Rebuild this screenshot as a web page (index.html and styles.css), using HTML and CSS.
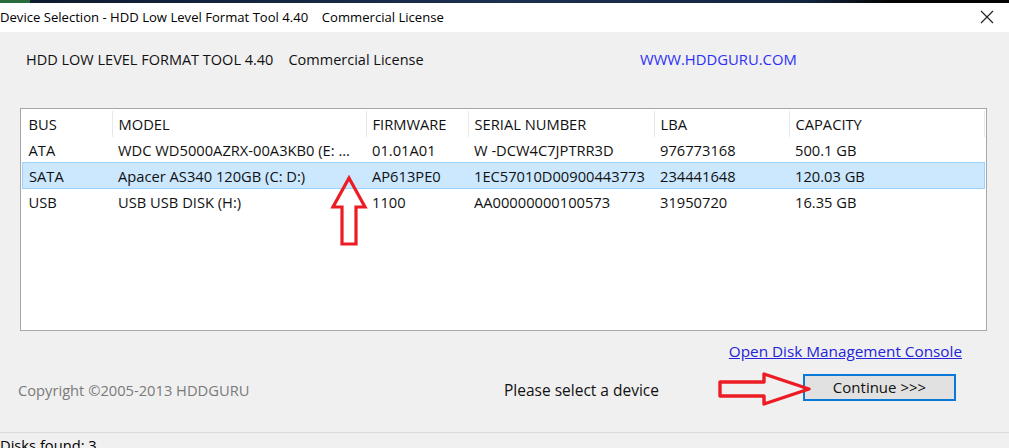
FILE: index.html
```html
<!DOCTYPE html>
<html lang="en">
  <head>
    <meta charset="UTF-8" />
    <meta name="viewport" content="width=device-width, initial-scale=1.0" />
    <title>Device Selection</title>
    <link rel="stylesheet" href="styles.css">
  </head>
  <body>
    <div class="top-strip"><span class="strip-green"></span></div>

    <!-- 창 제목 -->
    <div class="title-bar">
      <span class="title-text">Device Selection - HDD Low Level Format Tool 4.40&nbsp;&nbsp;&nbsp; Commercial License</span>
      <svg class="close-icon" width="14" height="14" viewBox="0 0 14 14">
        <path d="M1 1 L13 13 M13 1 L1 13" stroke="#222" stroke-width="1.2" fill="none" />
      </svg>
    </div>

    <div class="window">
      <div class="header">
        <span class="product">HDD LOW LEVEL FORMAT TOOL 4.40&nbsp;&nbsp;&nbsp; Commercial License</span>
        <a class="site-link" href="#">WWW.HDDGURU.COM</a>
      </div>

      <div class="device-list">
        <table class="devices">
          <thead>
            <tr>
              <th class="col-bus">BUS</th>
              <th class="col-model">MODEL</th>
              <th class="col-fw">FIRMWARE</th>
              <th class="col-serial">SERIAL NUMBER</th>
              <th class="col-lba">LBA</th>
              <th class="col-cap">CAPACITY</th>
            </tr>
          </thead>
          <tbody id="deviceRows"></tbody>
        </table>
      </div>

      <div class="link-row">
        <a class="console-link" href="#">Open Disk Management Console</a>
      </div>

      <div class="footer">
        <span class="copyright">Copyright ©2005-2013 HDDGURU</span>
        <span class="status-text">Please select a device</span>
        <button class="continue-btn">Continue &gt;&gt;&gt;</button>
      </div>
    </div>

    <div class="status-bar">Disks found: 3</div>

    <!-- 빨간 화살표 표시 -->
    <svg class="arrow arrow-up" width="40" height="80" viewBox="0 0 40 80">
      <path d="M20 3 L36 32 L27 32 L27 69 L13 69 L13 32 L4 32 Z" fill="none" stroke="#ec1c24" stroke-width="3.2" stroke-linejoin="miter" />
    </svg>
    <svg class="arrow arrow-right" width="100" height="36" viewBox="0 0 100 36">
      <path d="M3 11 L47 11 L47 3 L92 18 L47 33 L47 25 L3 25 Z" fill="none" stroke="#ec1c24" stroke-width="3.4" stroke-linejoin="round" />
    </svg>

    <script>
      const devices = [
        { bus: 'ATA', model: 'WDC WD5000AZRX-00A3KB0 (E: ...', fw: '01.01A01', serial: 'W -DCW4C7JPTRR3D', lba: '976773168', cap: '500.1 GB' },
        { bus: 'SATA', model: 'Apacer AS340 120GB (C: D:)', fw: 'AP613PE0', serial: '1EC57010D00900443773', lba: '234441648', cap: '120.03 GB', selected: true },
        { bus: 'USB', model: 'USB USB DISK (H:)', fw: '1100', serial: 'AA00000000100573', lba: '31950720', cap: '16.35 GB' },
      ];

      const rowsElement = document.getElementById('deviceRows');

      devices.forEach((d) => {
        const tr = document.createElement('tr');
        if (d.selected) tr.classList.add('selected');
        tr.innerHTML = `
          <td>${d.bus}</td>
          <td>${d.model}</td>
          <td>${d.fw}</td>
          <td>${d.serial}</td>
          <td>${d.lba}</td>
          <td>${d.cap}</td>
        `;
        rowsElement.appendChild(tr);
      });
    </script>
  </body>
</html>
```

FILE: styles.css
```css
body {
  font-family: "Open Sans", "Noto Sans", Arial, sans-serif;
  font-size: 14.7px;
  margin: 0;
  padding: 0;
  background-color: #f0f0f0;
  color: #111;
  width: 1009px;
  height: 448px;
  overflow: hidden;
  position: relative;
}

.top-strip {
  height: 3px;
  background: linear-gradient(90deg, #0d1a2e, #1c3050 50%, #13243f 80%, #050505 88%);
  display: flex;
}

.strip-green {
  width: 30px;
  background-color: #2a6b3c;
}

.title-bar {
  height: 29px;
  background-color: #fff;
  display: flex;
  align-items: center;
  justify-content: space-between;
  padding-right: 15px;
}

.title-text {
  font-size: 13.1px;
  color: #000;
  margin-top: -2px;
}

.close-icon {
  margin-top: -2px;
}

.window {
  padding: 0 22px 0 20px;
}

.header {
  display: flex;
  height: 50px;
  align-items: center;
  padding-top: 2px;
}

.product {
  width: 614px;
  padding-left: 6px;
  font-size: 14.5px;
}

.site-link {
  color: #2f2ff7;
  text-decoration: none;
  font-size: 14.8px;
}

.device-list {
  margin-top: 24px;
  height: 217px;
  background-color: #fff;
  border: 1px solid #a7a7a7;
  padding: 2px 1px;
  overflow: hidden;
}

.devices {
  border-collapse: collapse;
  width: 100%;
  table-layout: fixed;
}

.devices th {
  font-weight: normal;
  text-align: left;
  height: 26px;
  padding: 0 0 0 6px;
  border-right: 1px solid #e8e8e8;
  color: #111;
}

.devices td {
  height: 25px;
  padding: 0 0 0 6px;
  white-space: nowrap;
  overflow: hidden;
}

.devices tr.selected td {
  background-color: #cce8ff;
  border-top: 1px solid #99d1ff;
  border-bottom: 1px solid #99d1ff;
}

.devices tr.selected td:first-child {
  border-left: 1px solid #99d1ff;
}

.devices tr.selected td:last-child {
  border-right: 1px solid #99d1ff;
}

.col-bus { width: 83px; }
.col-model { width: 247px; }
.col-fw { width: 95px; }
.col-serial { width: 179px; }
.col-lba { width: 128px; }

.link-row {
  display: flex;
  justify-content: flex-end;
  padding: 10px 25px 0 0;
  height: 26px;
}

.console-link {
  color: #2323d8;
  font-size: 15.3px;
}

.footer {
  display: flex;
  align-items: center;
  height: 30px;
  margin-top: 5px;
}

.copyright {
  color: #7a7a7a;
  width: 486px;
  margin-left: -2px;
  margin-top: 5px;
}

.status-text {
  width: 299px;
  color: #111;
  font-size: 15.5px;
  margin-top: 5px;
}

.continue-btn {
  width: 153px;
  height: 27px;
  font-family: inherit;
  font-size: 15px;
  background-color: #e1e1e1;
  border: 2px solid #0a78d7;
  color: #111;
  padding: 0;
}

.status-bar {
  position: absolute;
  top: 432px;
  left: 0;
  right: 0;
  height: 20px;
  border-top: 1px solid #dadada;
  padding-top: 2px;
  color: #000;
}

.arrow {
  position: absolute;
}

.arrow-up {
  left: 329px;
  top: 175px;
}

.arrow-right {
  left: 717px;
  top: 371px;
}
```
